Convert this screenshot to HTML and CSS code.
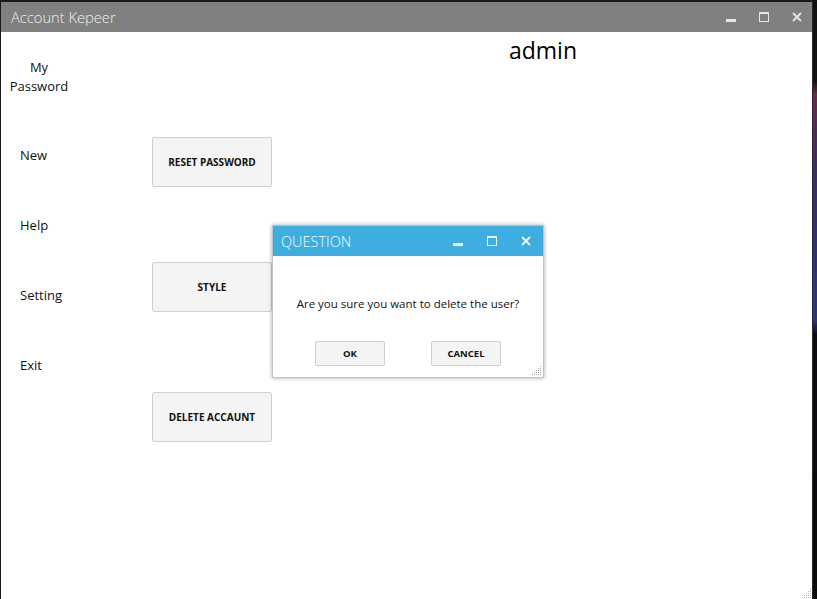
FILE: index.html
```html
<!DOCTYPE html>
<html>
<head>
<meta charset="utf-8">
<link rel="stylesheet" href="styles.css">
</head>
<body>
<div class="desktop">
  <div class="window">
    <div class="titlebar">
      <span class="title">Account Kepeer</span>
      <div class="controls">
        <svg class="ic" viewBox="0 0 10 10"><rect x="0" y="7" width="10" height="3" fill="#e6e6e6"/></svg>
        <svg class="ic" viewBox="0 0 10 10"><rect x="0.5" y="0.5" width="9" height="9" fill="none" stroke="#e6e6e6"/><rect x="0" y="0" width="10" height="2" fill="#e6e6e6"/></svg>
        <svg class="ic" viewBox="0 0 10 10"><path d="M1 1 L9 9 M9 1 L1 9" stroke="#e6e6e6" stroke-width="1.8"/></svg>
      </div>
    </div>
    <div class="content">
      <nav class="menu">
        <div class="item first">My<br>Password</div>
        <div class="item">New</div>
        <div class="item">Help</div>
        <div class="item">Setting</div>
        <div class="item">Exit</div>
      </nav>
      <main class="main">
        <h1 class="user">admin</h1>
        <div class="actions">
          <button class="btn">RESET PASSWORD</button>
          <button class="btn">STYLE</button>
          <button class="btn last">DELETE ACCAUNT</button>
        </div>
      </main>
      <svg class="grip win-grip" viewBox="0 0 12 12"><g fill="#b8b8b8"><rect x="10" y="2" width="1" height="1"/><rect x="8" y="4" width="1" height="1"/><rect x="10" y="4" width="1" height="1"/><rect x="6" y="6" width="1" height="1"/><rect x="8" y="6" width="1" height="1"/><rect x="10" y="6" width="1" height="1"/><rect x="4" y="8" width="1" height="1"/><rect x="6" y="8" width="1" height="1"/><rect x="8" y="8" width="1" height="1"/><rect x="10" y="8" width="1" height="1"/><rect x="2" y="10" width="1" height="1"/><rect x="4" y="10" width="1" height="1"/><rect x="6" y="10" width="1" height="1"/><rect x="8" y="10" width="1" height="1"/><rect x="10" y="10" width="1" height="1"/></g></svg>
    </div>
  </div>
  <div class="strip"></div>

  <div class="dialog">
    <div class="dlg-title">
      <span class="dlg-caption">QUESTION</span>
      <div class="dlg-controls">
        <svg class="ic" viewBox="0 0 10 10"><rect x="0" y="7" width="10" height="3" fill="#eaf6fc"/></svg>
        <svg class="ic" viewBox="0 0 10 10"><rect x="0.5" y="0.5" width="9" height="9" fill="none" stroke="#eaf6fc"/><rect x="0" y="0" width="10" height="2" fill="#eaf6fc"/></svg>
        <svg class="ic" viewBox="0 0 10 10"><path d="M1 1 L9 9 M9 1 L1 9" stroke="#eaf6fc" stroke-width="1.8"/></svg>
      </div>
    </div>
    <div class="dlg-body">
      <p class="msg">Are you sure you want to delete the user?</p>
      <div class="dlg-buttons">
        <button class="dbtn">OK</button>
        <button class="dbtn">CANCEL</button>
      </div>
      <svg class="grip dlg-grip" viewBox="0 0 12 12"><g fill="#a8a8a8"><rect x="10" y="2" width="1" height="1"/><rect x="8" y="4" width="1" height="1"/><rect x="10" y="4" width="1" height="1"/><rect x="6" y="6" width="1" height="1"/><rect x="8" y="6" width="1" height="1"/><rect x="10" y="6" width="1" height="1"/><rect x="4" y="8" width="1" height="1"/><rect x="6" y="8" width="1" height="1"/><rect x="8" y="8" width="1" height="1"/><rect x="10" y="8" width="1" height="1"/><rect x="2" y="10" width="1" height="1"/><rect x="4" y="10" width="1" height="1"/><rect x="6" y="10" width="1" height="1"/><rect x="8" y="10" width="1" height="1"/><rect x="10" y="10" width="1" height="1"/></g></svg>
    </div>
  </div>
</div>
</body>
</html>
```

FILE: styles.css
```css
html, body {
  margin: 0;
  padding: 0;
  background: #0c0c0c;
  overflow: hidden;
}
.desktop {
  position: relative;
  width: 817px;
  height: 599px;
  display: flex;
  font-family: "Open Sans", "Noto Sans", sans-serif;
}
.window {
  width: 813px;
  height: 599px;
  box-sizing: border-box;
  border-left: 1px solid #1a1a1a;
  border-top: 2px solid #1a1a1a;
  border-right: 1px solid #2a2a2a;
  background: #fff;
  display: flex;
  flex-direction: column;
}
.titlebar {
  height: 30px;
  background: #808080;
  display: flex;
  align-items: center;
  padding: 0 10px 0 10px;
  flex: none;
}
.title {
  color: #f0f0f0;
  font-size: 14.7px;
  font-weight: 300;
}
.controls, .dlg-controls {
  margin-left: auto;
  display: flex;
  align-items: center;
}
.controls { gap: 23px; }
.dlg-controls { gap: 24px; }
.ic {
  width: 10px;
  height: 10px;
  display: block;
}
.content {
  position: relative;
  flex: 1;
  display: flex;
}
.menu {
  width: 76px;
  flex: none;
  padding-top: 26px;
  display: flex;
  flex-direction: column;
  gap: 51px;
  font-size: 13px;
  line-height: 19px;
  color: #111;
}
.menu .item {
  padding-left: 19px;
}
.menu .item.first {
  padding-left: 0;
  text-align: center;
  margin-bottom: -1px;
}
.main {
  margin-left: 75px;
  flex: 1;
}
.user {
  margin: 4px 0 0 122px;
  width: 538px;
  text-align: center;
  font-size: 23px;
  font-weight: 400;
  line-height: 28px;
  color: #000;
}
.actions {
  margin-top: 73px;
  display: flex;
  flex-direction: column;
  gap: 75px;
  align-items: flex-start;
}
.btn {
  width: 120px;
  height: 50px;
  background: #f4f4f4;
  border: 1px solid #cfcfcf;
  border-radius: 2px;
  font-family: "Open Sans", "Noto Sans", sans-serif;
  font-size: 10px;
  font-weight: 700;
  color: #111;
  padding: 0;
}
.btn.last { margin-top: 5px; }
.grip {
  position: absolute;
  width: 12px;
  height: 12px;
}
.win-grip {
  right: 0;
  bottom: 0;
}
.strip {
  flex: 1;
  background: linear-gradient(to bottom, #111 0px, #111 80px, #6a2a4c 95px, #4a2a5e 140px, #30306e 220px, #2c3678 320px, #0b0b14 335px, #0b0b0b 599px);
}
.dialog {
  position: absolute;
  left: 272px;
  top: 225px;
  width: 270px;
  height: 151px;
  background: #fff;
  border: 1px solid #c2c2c2;
  box-shadow: 0 0 4px rgba(0,0,0,0.35);
  display: flex;
  flex-direction: column;
}
.dlg-title {
  height: 30px;
  background: #3eaee0;
  display: flex;
  align-items: center;
  padding: 0 12px 0 8px;
  flex: none;
}
.dlg-caption {
  color: #f4fbff;
  font-size: 14.5px;
  font-weight: 300;
}
.dlg-body {
  position: relative;
  flex: 1;
  display: flex;
  flex-direction: column;
  align-items: center;
}
.msg {
  margin: 39px 0 0 0;
  font-size: 11.5px;
  line-height: 18px;
  color: #111;
}
.dlg-buttons {
  margin-top: 28px;
  display: flex;
  gap: 46px;
}
.dbtn {
  width: 70px;
  height: 25px;
  background: #f4f4f4;
  border: 1px solid #cfcfcf;
  border-radius: 2px;
  font-family: "Open Sans", "Noto Sans", sans-serif;
  font-size: 9.5px;
  font-weight: 700;
  color: #111;
  padding: 0;
}
.dlg-grip {
  right: 1px;
  bottom: 1px;
}
```
